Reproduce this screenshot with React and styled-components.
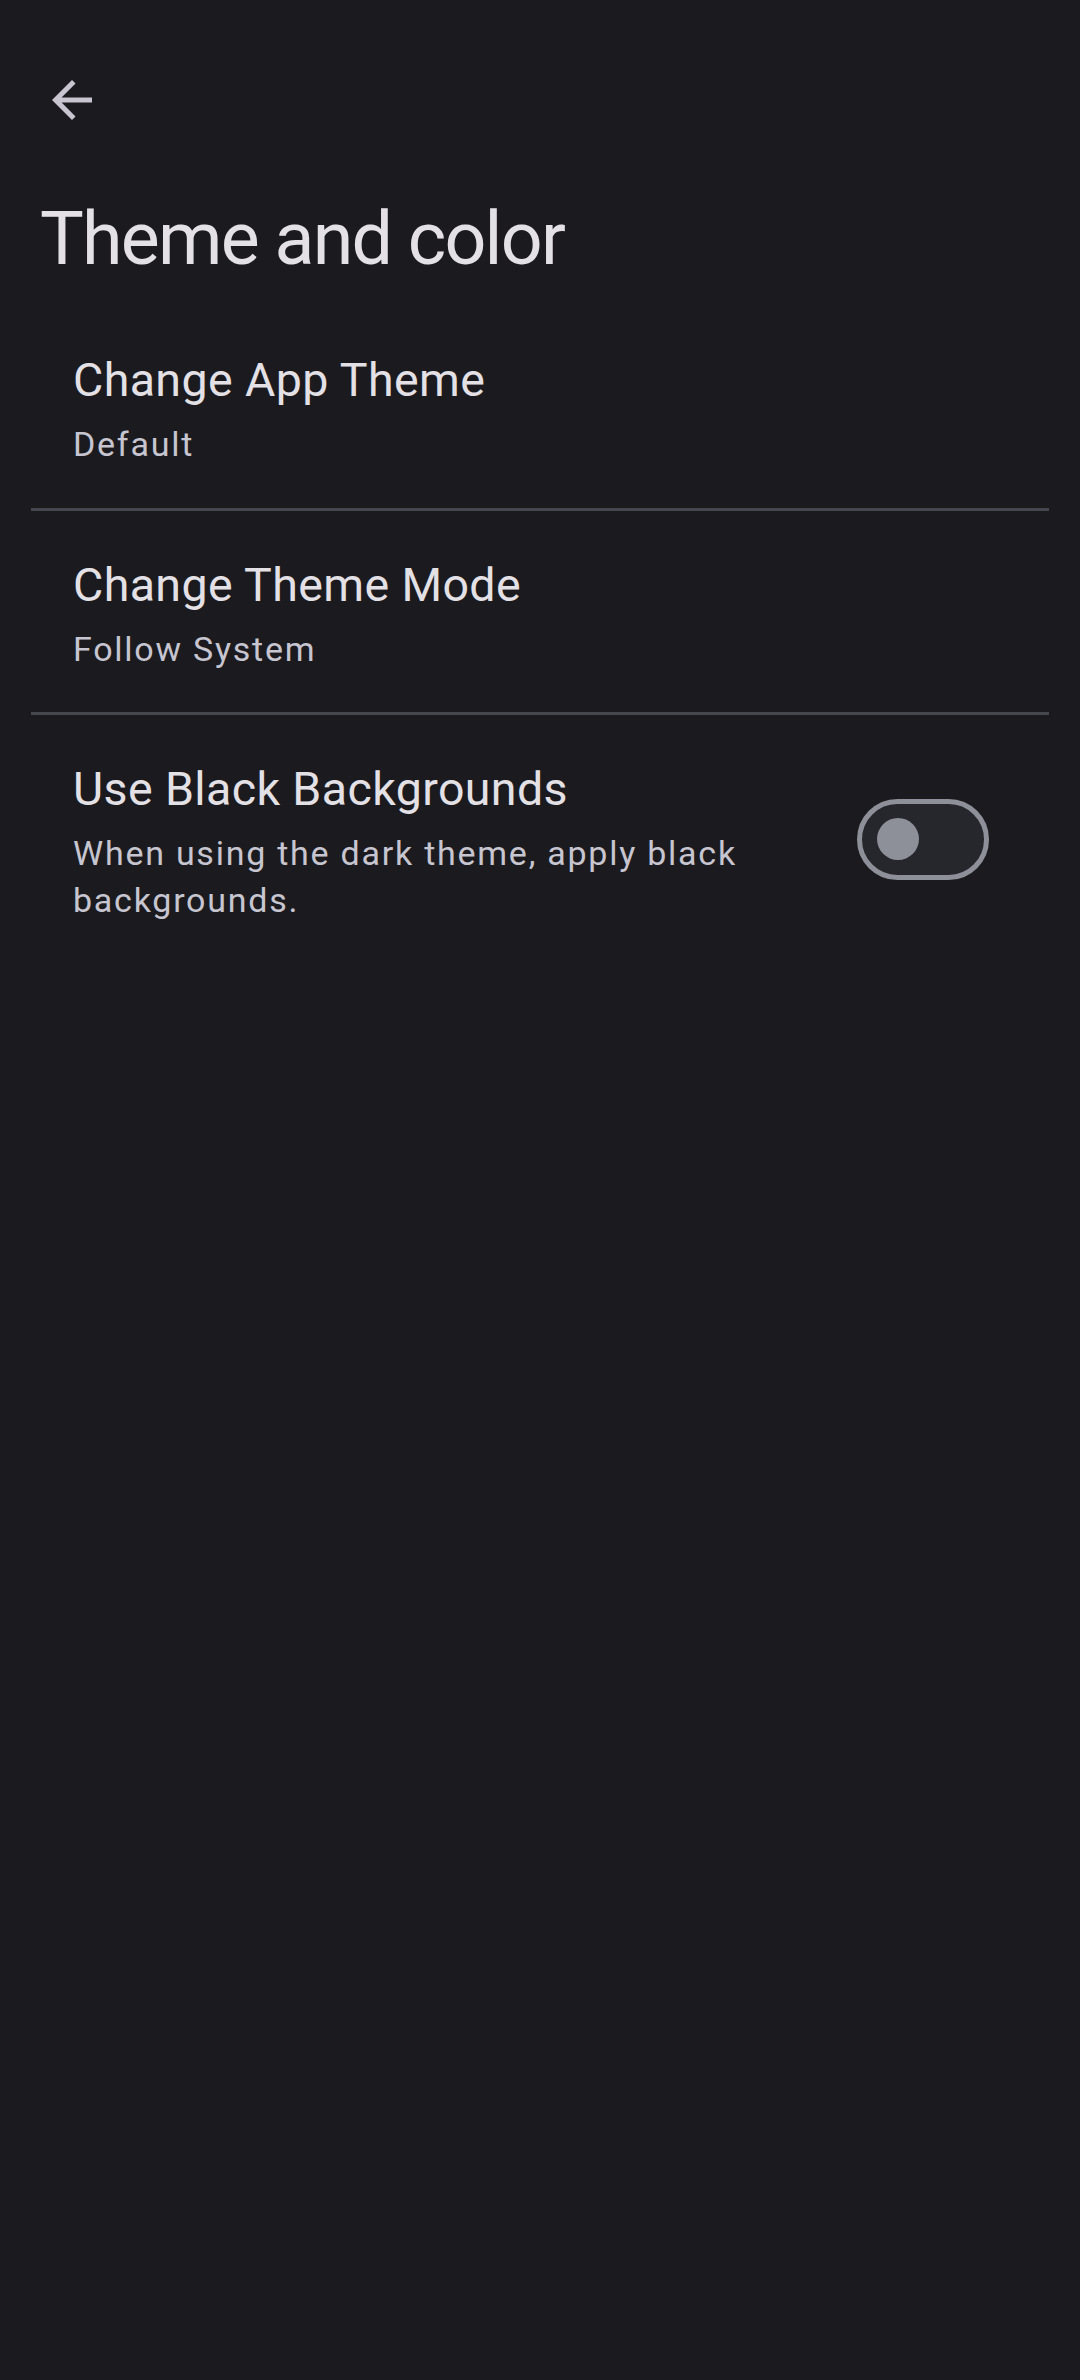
import React, { useState } from "react";
import styled, { createGlobalStyle } from "styled-components";

const GlobalStyle = createGlobalStyle`
  html, body {
    margin: 0;
    padding: 0;
    background: #1b1b1f;
  }
  body {
    font-family: Roboto, "Noto Sans", "Liberation Sans", sans-serif;
    -webkit-font-smoothing: antialiased;
  }
`;

const Screen = styled.div`
  min-height: 2380px;
  background: #1b1b1f;
  color: #e4e1e6;
  display: flex;
  flex-direction: column;
`;

const TopBar = styled.header`
  height: 200px;
  display: flex;
  align-items: center;
  padding-left: 12px;
`;

const IconButton = styled.button`
  width: 120px;
  height: 120px;
  border: none;
  background: transparent;
  padding: 0;
  display: flex;
  align-items: center;
  justify-content: center;
  color: #c8c5d0;
  cursor: pointer;
`;

const Title = styled.h1`
  margin: 0 0 28px;
  padding-left: 40px;
  font-size: 73.5px;
  line-height: 78px;
  font-weight: 400;
  letter-spacing: -1.75px;
  color: #e4e1e6;
`;

const List = styled.div`
  display: flex;
  flex-direction: column;
`;

const Item = styled.div`
  display: flex;
  align-items: center;
  padding: 46px 70px 39.5px 73px;
`;

const Divider = styled.div`
  height: 3px;
  margin: 0 31px;
  background: #46464f;
`;

const TextColumn = styled.div`
  flex: 1;
  display: flex;
  flex-direction: column;
  min-width: 0;
`;

const ItemTitle = styled.div`
  font-size: 46.5px;
  line-height: 56px;
  color: #e4e1e6;
  letter-spacing: 0.4px;
`;

const ItemSubtitle = styled.div`
  margin-top: 13px;
  font-size: 34px;
  line-height: 47px;
  color: #c6c5d0;
  letter-spacing: 1.75px;
`;

const SwitchTrack = styled.button`
  flex: none;
  box-sizing: border-box;
  width: 132px;
  height: 81px;
  margin: 0 21px 7px 40px;
  padding: 0 0 0 15px;
  border-radius: 41px;
  border: 5px solid #8e9099;
  background: ${(p) => (p.$on ? "#b4c5ff" : "#26272c")};
  display: flex;
  align-items: center;
  justify-content: ${(p) => (p.$on ? "flex-end" : "flex-start")};
  cursor: pointer;
`;

const SwitchThumb = styled.span`
  width: 42px;
  height: 42px;
  border-radius: 50%;
  background: #8e9099;
`;

function BackArrow() {
  return (
    <svg width="60" height="60" viewBox="0 0 24 24" aria-hidden="true">
      <path
        fill="currentColor"
        d="M20 11H7.83l5.59-5.59L12 4l-8 8 8 8 1.41-1.41L7.83 13H20v-2z"
      />
    </svg>
  );
}

export default function App() {
  const [black, setBlack] = useState(false);
  return (
    <>
      <GlobalStyle />
      <Screen>
        <TopBar>
          <IconButton aria-label="Back">
            <BackArrow />
          </IconButton>
        </TopBar>
        <Title>Theme and color</Title>
        <List>
          <Item>
            <TextColumn>
              <ItemTitle>Change App Theme</ItemTitle>
              <ItemSubtitle>Default</ItemSubtitle>
            </TextColumn>
          </Item>
          <Divider />
          <Item>
            <TextColumn>
              <ItemTitle>Change Theme Mode</ItemTitle>
              <ItemSubtitle>Follow System</ItemSubtitle>
            </TextColumn>
          </Item>
          <Divider />
          <Item>
            <TextColumn>
              <ItemTitle>Use Black Backgrounds</ItemTitle>
              <ItemSubtitle>
                When using the dark theme, apply black backgrounds.
              </ItemSubtitle>
            </TextColumn>
            <SwitchTrack
              $on={black}
              aria-pressed={black}
              onClick={() => setBlack((v) => !v)}
            >
              <SwitchThumb />
            </SwitchTrack>
          </Item>
        </List>
      </Screen>
    </>
  );
}
